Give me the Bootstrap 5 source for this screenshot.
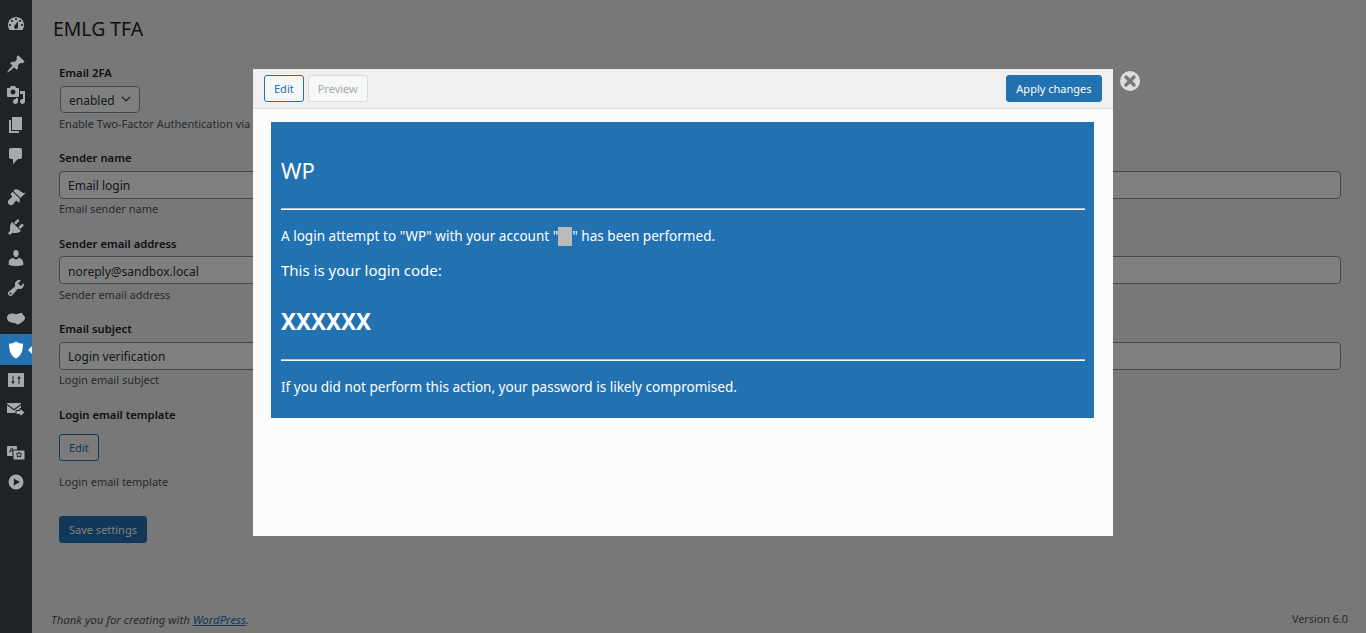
<!DOCTYPE html>
<html lang="en">
<head>
    <meta charset="UTF-8">
    <meta name="viewport" content="width=device-width, initial-scale=1.0">
    <title>EMLG TFA</title>
    <link href="https://cdn.jsdelivr.net/npm/bootstrap@5.3.0/dist/css/bootstrap.min.css" rel="stylesheet">
    <style>
        html, body { height: 100%; }
        body {
            background: #f0f0f1;
            color: #1d2327;
            font-family: "Noto Sans", "Open Sans", sans-serif;
            font-size: 11.25px;
            overflow: hidden;
        }
        /* sidebar */
        .wp-side { width: 32px; background: #1d2327; padding-top: 8px; flex-shrink: 0; position: relative; z-index: 5; }
        .side-group { margin-bottom: 10.2px; }
        .side-item { height: 30.6px; position: relative; }
        .side-item svg { width: 20px; height: 20px; fill: #a7aaad; }
        .side-item.is-active { background: #2271b1; }
        .side-item.is-active svg { fill: #fff; }
        .side-item.is-active::after {
            content: "";
            position: absolute;
            right: 0;
            top: 50%;
            margin-top: -4px;
            border: 4px solid transparent;
            border-right-color: #f0f0f1;
        }
        /* page */
        .wp-title { font-size: 19.4px; font-weight: 400; line-height: 29px; margin: 14px 0 21px 21px; }
        .wp-form { padding: 0 25px 0 27px; }
        .field-box { margin-bottom: 16.9px; }
        .field-label { font-weight: 600; line-height: 18px; margin-bottom: 3.5px; display: block; }
        .field-help { color: #50575e; font-size: 11px; line-height: 18px; margin-top: 1.5px; }
        .wp-form .form-control, .wp-form .form-select {
            font-size: 12px;
            color: #2c3338;
            border-color: #8c8f94;
            border-radius: 4px;
            min-height: 27.6px;
            height: 27.6px;
            padding: 2px 8px 0;
        }
        .wp-form .form-select { width: 80px; margin-left: 1px; padding-top: 3px; background-position: right 6px center; background-size: 14px 10px; }
        .wp-btn { font-size: 11px; line-height: 25px; height: 27px; padding: 0 9px; border-radius: 3px; }
        .btn-soft { color: #2271b1; border: 1px solid #2271b1; background: #f6f7f7; }
        .btn-off { color: #a7aaad; border: 1px solid #dcdcde; background: #f6f7f7; }
        .btn-wp { color: #fff; border: 1px solid #2271b1; background: #2271b1; }
        .edit-gap { margin: 10px 0 12px; }
        .help-gap { margin-bottom: 25px; }
        .wp-foot { padding: 0 18px 5px 19px; font-size: 11.4px; color: #50575e; }
        .wp-foot a { color: #2271b1; }
        .foot-version { font-size: 10.8px; }
        /* dim layer and editor */
        .dim-layer { position: absolute; inset: 0; background: rgba(0, 0, 0, .5); z-index: 2; }
        .tpl-modal {
            position: absolute;
            left: 253px;
            top: 69px;
            width: 860px;
            height: 467px;
            background: #fcfcfc;
            z-index: 3;
        }
        .tpl-head { height: 40px; background: #f0f0f1; border-bottom: 1px solid #dcdcde; padding: 6px 11px; }
        .tpl-head .btn-wp { padding: 0 9.500px; }
        .tpl-body { padding: 13px 19px 0 18px; }
        .tpl-mail { background: #2271b1; color: #fff; height: 296px; padding: 0 9px 0 10px; font-size: 13.55px; }
        .mail-name { font-size: 22px; line-height: 30px; padding-top: 33px; margin-bottom: 23px; }
        .mail-rule { border: 0; border-top: 1px solid #b4c4d4; border-bottom: 1px solid #fff; opacity: 1; margin: 0; }
        .mail-line { line-height: 18px; margin: 17px 0 0; }
        .mail-lead { font-size: 15px; line-height: 22px; margin: 13px 0 0; }
        .mail-code { font-size: 22.4px; font-weight: 700; line-height: 32px; margin: 25px 0 21px; }
        .mail-mask { display: inline-block; width: 14px; height: 19px; background: #bbb; vertical-align: -5px; }
        .tpl-close { position: absolute; left: 1120px; top: 71px; width: 20px; height: 20px; z-index: 3; }
    </style>
</head>
<body>
    <div class="d-flex vh-100 position-relative">
        <!-- Admin menu -->
        <div class="wp-side">
            <div class="side-group">
                <div class="side-item d-flex align-items-center justify-content-center"><svg viewBox="0 0 20 20"><path transform="translate(0 1)" fill-rule="evenodd" d="M3.76 16h12.48c1.1-1.37 1.76-3.11 1.76-5 0-4.42-3.58-8-8-8s-8 3.58-8 8c0 1.89.66 3.63 1.76 5zM10 4c.55 0 1 .45 1 1s-.45 1-1 1-1-.45-1-1 .45-1 1-1zM6 6c.55 0 1 .45 1 1s-.45 1-1 1-1-.45-1-1 .45-1 1-1zm8 0c.55 0 1 .45 1 1s-.45 1-1 1-1-.45-1-1 .45-1 1-1zm-5.37 5.55L12 7v6c0 1.1-.9 2-2 2s-2-.9-2-2c0-.57.24-1.08.63-1.45zM4 10c.55 0 1 .45 1 1s-.45 1-1 1-1-.45-1-1 .45-1 1-1zm12 0c.55 0 1 .45 1 1s-.45 1-1 1-1-.45-1-1 .45-1 1-1z"/></svg></div>
            </div>
            <div class="side-group">
                <div class="side-item d-flex align-items-center justify-content-center"><svg viewBox="0 0 20 20"><path d="M10.44 3.02l1.82-1.82 6.36 6.35-1.83 1.82c-1.05-.68-2.48-.57-3.41.36l-.75.75c-.92.93-1.04 2.35-.35 3.41l-1.83 1.82-2.41-2.41-2.8 2.79c-.42.42-3.38 2.71-3.8 2.29s1.86-3.39 2.28-3.81l2.79-2.79L4.1 9.36l1.83-1.82c1.05.69 2.48.57 3.41-.36l.75-.75c.93-.92 1.05-2.35.35-3.41z"/></svg></div>
                <div class="side-item d-flex align-items-center justify-content-center"><svg viewBox="0 0 20 20"><path fill-rule="evenodd" d="M13 11V4c0-.55-.45-1-1-1h-1.67L9 1H5L3.67 3H2c-.55 0-1 .45-1 1v7c0 .55.45 1 1 1h10c.55 0 1-.45 1-1zM7 4.5c1.38 0 2.5 1.12 2.5 2.5S8.38 9.5 7 9.5 4.5 8.38 4.5 7 5.62 4.5 7 4.5zM14 6h5v10.5c0 1.38-1.12 2.5-2.5 2.5S14 17.88 14 16.5s1.12-2.5 2.5-2.5c.17 0 .34.02.5.05V9h-3V6zm-4 8.05V13h2v3.5c0 1.38-1.12 2.5-2.5 2.5S7 17.88 7 16.5 8.12 14 9.5 14c.17 0 .34.02.5.05z"/></svg></div>
                <div class="side-item d-flex align-items-center justify-content-center"><svg viewBox="0 0 20 20"><path d="M6 15V2h10v13H6zm-1 1h8v2H3V5h2v11z"/></svg></div>
                <div class="side-item d-flex align-items-center justify-content-center"><svg viewBox="0 0 20 20"><path d="M5 2h9c1.1 0 2 .9 2 2v7c0 1.1-.9 2-2 2h-2l-5 5v-5H5c-1.1 0-2-.9-2-2V4c0-1.1.9-2 2-2z"/></svg></div>
            </div>
            <div class="side-group">
                <div class="side-item d-flex align-items-center justify-content-center"><svg viewBox="0 0 20 20"><path d="M14.48 11.06L7.41 3.99l1.5-1.5c.5-.56 2.3-.47 3.51.32 1.21.8 1.43 1.28 2.91 2.1 1.18.64 2.45 1.26 4.45.85zM13.77 11.77L6.7 4.7 4.93 6.47c-.39.39-.39 1.02 0 1.41l1.06 1.06c.39.39.39 1.03 0 1.42-.6.6-1.43 1.11-2.21 1.69-.35.26-.7.53-1.01.84-1.2 1.2-1.2 3.2 0 4.4s3.2 1.2 4.4 0c.31-.31.58-.66.84-1.01.58-.78 1.09-1.61 1.69-2.21.39-.39 1.03-.39 1.42 0l1.06 1.06c.39.39 1.02.39 1.41 0z"/></svg></div>
                <div class="side-item d-flex align-items-center justify-content-center"><svg viewBox="0 0 20 20"><path d="M13.11 4.36L9.87 7.6 8 5.73l3.24-3.24c.35-.34 1.05-.2 1.56.32.52.51.66 1.21.31 1.55zm-8 1.77l.91-1.12 9.01 9.01-1.19.84c-.71.71-2.63 1.16-3.82 1.16H6.14L4.9 17.26c-.59.59-1.54.59-2.12 0-.59-.58-.59-1.53 0-2.12l1.24-1.24v-3.88c0-1.13.4-3.19 1.09-3.89zm7.26 3.97l3.24-3.24c.34-.35 1.04-.21 1.55.31.52.51.66 1.21.31 1.55l-3.24 3.25z"/></svg></div>
                <div class="side-item d-flex align-items-center justify-content-center"><svg viewBox="0 0 20 20"><path d="M10 9.25c-2.27 0-2.73-3.44-2.73-3.44C7 4.02 7.82 2 9.97 2c2.16 0 2.98 2.02 2.71 3.81 0 0-.41 3.44-2.68 3.44zm0 2.57L12.72 10c2.39 0 4.52 2.33 4.52 4.53v2.49s-3.65 1.13-7.24 1.13c-3.65 0-7.24-1.13-7.24-1.13v-2.49c0-2.25 1.94-4.48 4.47-4.48z"/></svg></div>
                <div class="side-item d-flex align-items-center justify-content-center"><svg viewBox="0 0 20 20"><path fill-rule="evenodd" d="M16.68 9.77c-1.34 1.34-3.3 1.67-4.95.99l-5.41 6.52c-.99.99-2.59.99-3.58 0s-.99-2.59 0-3.57l6.52-5.42c-.68-1.65-.35-3.61.99-4.95 1.28-1.28 3.12-1.62 4.72-1.06l-2.89 2.89 2.82 2.82 2.86-2.87c.53 1.58.18 3.39-1.08 4.67zM3.81 16.21c.4.39 1.04.39 1.43 0 .4-.4.4-1.04 0-1.43-.39-.4-1.03-.4-1.43 0-.39.39-.39 1.03 0 1.43z"/></svg></div>
                <div class="side-item d-flex align-items-center justify-content-center"><svg viewBox="0 0 20 20"><path d="M1 8.500C1 6 3.500 4.500 6.500 4.500c1.500 0 2.800.4 3.800 1 .9-1 2.200-1.300 3.500-1 .6-.5 1.700-.6 2.400-.1.500.4.700 1 .6 1.400 1.200.6 2.200 1.700 2.200 3 0 1.900-1.700 3.600-3.500 4.700-1.300.8-2.700 1.500-3.900 2.200-.9-.7-1.900-1.200-3-1.700C3.800 13.800 1 11.800 1 8.500z"/></svg></div>
                <div class="side-item is-active d-flex align-items-center justify-content-center"><svg viewBox="0 0 20 20"><path d="M10 1.5c2.2 1.5 4.5 2.2 7 2.200 0 7.500-2.200 12.500-7 14.800C5.200 16.200 3 11.200 3 3.700c2.500 0 4.800-.7 7-2.200z"/></svg></div>
                <div class="side-item d-flex align-items-center justify-content-center"><svg viewBox="0 0 20 20"><path fill-rule="evenodd" d="M18 16V4c0-.55-.45-1-1-1H3c-.55 0-1 .45-1 1v12c0 .55.45 1 1 1h14c.55 0 1-.45 1-1zM6.500 6h1v5.500h1.500L7 14l-2-2.500h1.500zM12.500 14h1V8.500H15L13 6l-2 2.500h1.500z"/></svg></div>
                <div class="side-item d-flex align-items-center justify-content-center"><svg viewBox="0 0 20 20"><path d="M1.500 2h13c.5 0 .7.6.3.9L8 8 1.200 2.900C.8 2.600 1 2 1.500 2zM1 4.200l7 5.300 7-5.300V12H1z"/><path stroke="#1d2327" d="M10 9.500h4V7l5 4.500-5 4.500v-2.500h-4z"/></svg></div>
            </div>
            <div class="side-group">
                <div class="side-item d-flex align-items-center justify-content-center"><svg viewBox="0 0 20 20"><rect x="1" y="4" width="10" height="10" rx="1"/><path fill="none" stroke="#1d2327" d="M3.500 10.500l2-4.500h.5l2 4.500M4.500 9h3"/><rect x="7" y="8" width="12" height="10" rx="1" stroke="#1d2327"/><path fill="none" stroke="#1d2327" d="M13 10l.8 1.700 1.900.2-1.400 1.300.4 1.900-1.700-1-1.700 1 .4-1.900-1.400-1.300 1.900-.2z"/></svg></div>
                <div class="side-item d-flex align-items-center justify-content-center"><svg viewBox="0 0 20 20"><path fill-rule="evenodd" d="M10 2.500a7.500 7.500 0 1 0 0 15 7.500 7.500 0 0 0 0-15zM7.800 6.500L14 10l-6.200 3.500z"/></svg></div>
            </div>
        </div>

        <!-- Page content -->
        <div class="flex-grow-1 d-flex flex-column">
            <h1 class="wp-title">EMLG TFA</h1>
            <form class="wp-form">
                <div class="field-box">
                    <label class="field-label">Email 2FA</label>
                    <select class="form-select"><option>enabled</option></select>
                    <div class="field-help">Enable Two-Factor Authentication via email.</div>
                </div>
                <div class="field-box">
                    <label class="field-label">Sender name</label>
                    <input type="text" class="form-control" value="Email login">
                    <div class="field-help">Email sender name</div>
                </div>
                <div class="field-box">
                    <label class="field-label">Sender email address</label>
                    <input type="text" class="form-control" value="noreply@sandbox.local">
                    <div class="field-help">Sender email address</div>
                </div>
                <div class="field-box">
                    <label class="field-label">Email subject</label>
                    <input type="text" class="form-control" value="Login verification">
                    <div class="field-help">Login email subject</div>
                </div>
                <div>
                    <label class="field-label">Login email template</label>
                    <div class="edit-gap"><button type="button" class="btn wp-btn btn-soft">Edit</button></div>
                    <div class="field-help help-gap">Login email template</div>
                </div>
                <button type="button" class="btn wp-btn btn-wp">Save settings</button>
            </form>
            <div class="wp-foot mt-auto d-flex justify-content-between align-items-center">
                <em>Thank you for creating with <a href="#">WordPress</a>.</em>
                <span class="foot-version">Version 6.0</span>
            </div>
        </div>

        <div class="dim-layer"></div>

        <!-- Template editor -->
        <div class="tpl-modal">
            <div class="tpl-head d-flex align-items-start gap-1">
                <button type="button" class="btn wp-btn btn-soft">Edit</button>
                <button type="button" class="btn wp-btn btn-off">Preview</button>
                <button type="button" class="btn wp-btn btn-wp ms-auto">Apply changes</button>
            </div>
            <div class="tpl-body">
                <div class="tpl-mail">
                    <div class="mail-name">WP</div>
                    <hr class="mail-rule">
                    <p class="mail-line">A login attempt to "WP" with your account "<span class="mail-mask"></span>" has been performed.</p>
                    <p class="mail-lead">This is your login code:</p>
                    <div class="mail-code">XXXXXX</div>
                    <hr class="mail-rule">
                    <p class="mail-line">If you did not perform this action, your password is likely compromised.</p>
                </div>
            </div>
        </div>
        <svg class="tpl-close" viewBox="0 0 20 20"><circle cx="10" cy="10" r="10" fill="#ddd"/><path d="M6 6l8 8M14 6l-8 8" stroke="#787878" stroke-width="3.400" stroke-linecap="round"/></svg>
    </div>
    <script src="https://cdn.jsdelivr.net/npm/bootstrap@5.3.0/dist/js/bootstrap.bundle.min.js"></script>
</body>
</html>
